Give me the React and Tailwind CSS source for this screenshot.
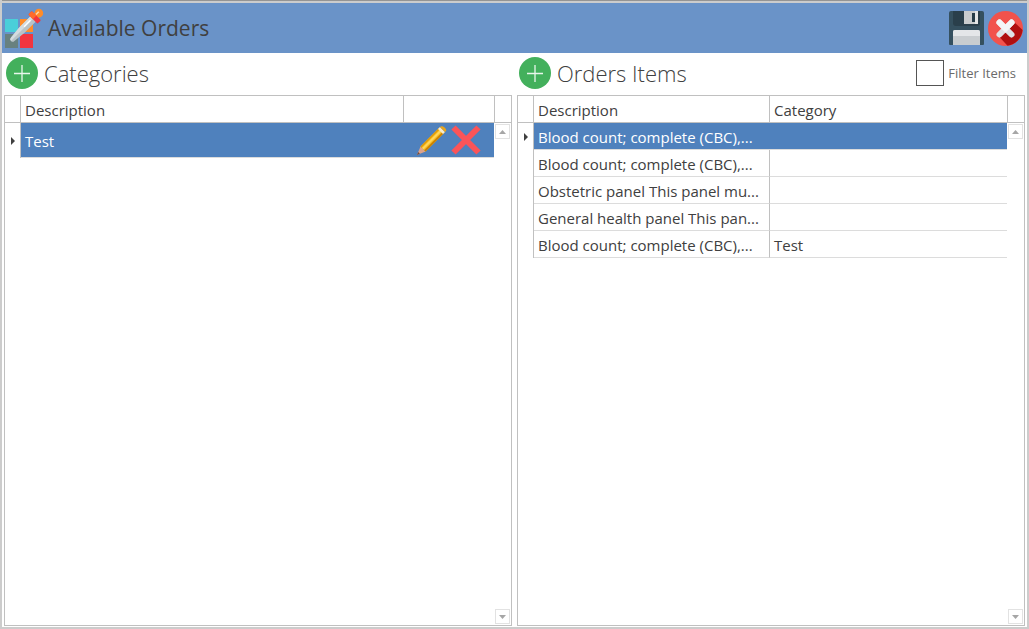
import React from "react";

function PaletteIcon() {
  return (
    <svg width="40" height="42" viewBox="0 0 40 42" aria-hidden="true">
      <rect x="1" y="12" width="13" height="13" fill="#4acfd9" />
      <rect x="16" y="12" width="13" height="13" fill="#ff8c29" />
      <rect x="1" y="27" width="13" height="14" fill="#68817f" />
      <rect x="16" y="27" width="13" height="14" fill="#f2353f" />
      <g transform="translate(8 33) rotate(45)">
        <path d="M-3.800-31h7.600v17L2.400-1a2.400 2.400 0 0 1-4.800 0l-1.400-13z" fill="#b9c3c7" />
        <path d="M-3.800-31H0V1.400A2.400 2.400 0 0 1-2.400-1l-1.400-13z" fill="#d5dcdf" />
        <path d="M-1.600-27h1.400v9h-1.400z" fill="#fff" />
        <circle cx="0" cy="-38" r="4.300" fill="#ff8c29" />
        <path d="M-3-37h6v5h-6z" fill="#ff8c29" />
        <rect x="-6.500" y="-34.500" width="13" height="5" rx="1" fill="#f2353f" />
        <path d="M-5.500-34.500H0v5h-5.500a1 1 0 0 1-1-1v-3a1 1 0 0 1 1-1z" fill="#ff6a2b" />
        <path d="M-1.800-35v-4h1.400v4z" fill="#ffd9b0" />
      </g>
    </svg>
  );
}

function SaveIcon() {
  return (
    <svg width="35" height="35" viewBox="0 0 35 35" aria-hidden="true">
      <path d="M2 0h31a2 2 0 0 1 2 2v31a1 1 0 0 1-1 1H1a1 1 0 0 1-1-1V2a2 2 0 0 1 2-2z" fill="#35505f" />
      <path d="M4 0h27v12a3 3 0 0 1-3 3H7a3 3 0 0 1-3-3z" fill="#2a3f4b" />
      <path d="M15 0h14v13H15z" fill="#c9ccce" />
      <path d="M26 0h3v13h-3z" fill="#e4e6e7" />
      <rect x="23" y="2" width="3" height="9" fill="#263c48" />
      <path d="M4 34V21a2 2 0 0 1 2-2h23a2 2 0 0 1 2 2v13z" fill="#c9cdd0" />
      <path d="M4 25v-4a2 2 0 0 1 2-2h23a2 2 0 0 1 2 2v4z" fill="#e4e6e8" />
    </svg>
  );
}

function CloseIcon() {
  return (
    <svg width="35" height="35" viewBox="0 0 35 35" aria-hidden="true">
      <circle cx="17.500" cy="17.500" r="17.500" fill="#f2524c" />
      <path d="M11 25.500l8.500 9.200A17.500 17.500 0 0 0 34.600 19L25 10z" fill="#b01010" />
      <path d="M11.500 11.500l12 12M23.500 11.500l-12 12" stroke="#dfe3e6" strokeWidth="6" strokeLinecap="round" />
      <path d="M11.500 11.500l6 6 6-6" stroke="#f4f5f6" strokeWidth="6" strokeLinecap="round" fill="none" />
    </svg>
  );
}

function AddIcon() {
  return (
    <svg width="32" height="32" viewBox="0 0 32 32" aria-hidden="true">
      <circle cx="16" cy="16" r="16" fill="#43b05c" />
      <path d="M16 8v17M8 16.500h16" stroke="#e8f6eb" strokeWidth="1.300" />
    </svg>
  );
}

function PencilIcon() {
  return (
    <svg width="30" height="30" viewBox="0 0 30 30" aria-hidden="true">
      <path d="M0 30l3.500-8.500 5 5z" fill="#dfa38a" />
      <path d="M0 30l1.200-2.900 1.700 1.700z" fill="#6d4a3f" />
      <path d="M3.500 21.500L22.500 2.500l5 5-19 19z" fill="#f5b81c" />
      <path d="M3.500 21.500L22.500 2.500l1 1-19 19z" fill="#e09a08" />
      <path d="M5 23L24 4l1.500 1.500-19 19z" fill="#ffd65a" />
      <path d="M7.300 25.300l19-19 1.200 1.200-19 19z" fill="#c97f00" />
      <path d="M21 4l2-2 5 5-2 2z" fill="#f4ead0" />
      <path d="M23 2c1.500-3 9 2.500 5 5z" fill="#e8a51c" />
    </svg>
  );
}

function DeleteIcon() {
  return (
    <svg width="30" height="30" viewBox="0 0 30 30" aria-hidden="true">
      <path d="M2.500 2.500l25 25M27.500 2.500l-25 25" stroke="#fb5458" strokeWidth="6" />
    </svg>
  );
}

function ScrollButton({ label, up }) {
  return (
    <button
      type="button"
      aria-label={label}
      className="flex size-[15px] items-center justify-center border border-[#e2e2e2] bg-white"
    >
      <svg width="7" height="4" viewBox="0 0 7 4" aria-hidden="true">
        <path d={up ? "M0 4L3.500 0 7 4z" : "M0 0h7L3.500 4z"} fill="#a6a6a6" />
      </svg>
    </button>
  );
}

function GridPanel({ label, children }) {
  return (
    <div className="flex flex-1 border border-[#c0c0c0]">
      <div className="min-w-0 flex-1" aria-label={label} role="group">
        {children}
      </div>
      <div className="flex w-[17px] flex-col">
        <div className="h-[27px] border-b border-l border-[#c0c0c0]" />
        <div className="flex flex-1 flex-col items-center justify-between py-px">
          <ScrollButton label={"Scroll " + label + " up"} up />
          <ScrollButton label={"Scroll " + label + " down"} />
        </div>
      </div>
    </div>
  );
}

function RowMarker({ active }) {
  return (
    <td className="border-r border-[#c0c0c0] p-0">
      {active && (
        <svg width="4" height="8" viewBox="0 0 4 8" className="ml-1.5" aria-label="Current row">
          <path d="M0 0l4 4-4 4z" fill="#404040" />
        </svg>
      )}
    </td>
  );
}

const headCell = "border-b border-r border-[#c0c0c0] px-1 pt-0.5 pb-0 text-left font-normal";

function SectionTitle({ children, addLabel }) {
  return (
    <div className="flex items-center gap-1.5">
      <button type="button" aria-label={addLabel}>
        <AddIcon />
      </button>
      <h2 className="text-[22px] font-light text-[#404040]">{children}</h2>
    </div>
  );
}

const orders = [
  { description: "Blood count; complete (CBC),...", category: "" },
  { description: "Blood count; complete (CBC),...", category: "" },
  { description: "Obstetric panel This panel mu...", category: "" },
  { description: "General health panel This pan...", category: "" },
  { description: "Blood count; complete (CBC),...", category: "Test" },
];

export default function App() {
  return (
    <div className="flex min-h-screen flex-col border-x-2 border-b-2 border-[#cccccc] bg-white font-['Open_Sans','Noto_Sans',sans-serif] text-[15px] leading-5 text-[#404040]">
      <div className="h-[3px] border-t border-[#949494] bg-[#cccccc]" />
      <header className="flex h-[50px] items-center justify-between bg-[#6a93c8] pr-1 pl-0.5">
        <div className="flex items-center gap-1">
          <PaletteIcon />
          <h1 className="text-[21px]">Available Orders</h1>
        </div>
        <div className="flex items-center gap-1">
          <button type="button" aria-label="Save">
            <SaveIcon />
          </button>
          <button type="button" aria-label="Close">
            <CloseIcon />
          </button>
        </div>
      </header>

      <main className="flex flex-1 gap-[5px] px-0.5 pb-px">
        <section className="flex min-w-0 flex-1 flex-col">
          <div className="flex h-[42px] items-center px-0.5 pb-0.5">
            <SectionTitle addLabel="Add category">Categories</SectionTitle>
          </div>
          <GridPanel label="categories">
            <table className="w-full table-fixed border-separate border-spacing-0">
              <colgroup>
                <col className="w-4" />
                <col />
                <col className="w-[90px]" />
              </colgroup>
              <thead>
                <tr className="h-[27px]">
                  <th className={headCell} />
                  <th className={headCell}>Description</th>
                  <th className="border-b border-[#c0c0c0]" />
                </tr>
              </thead>
              <tbody>
                <tr className="h-[35px]">
                  <RowMarker active />
                  <td className="border-b border-[#dcdcdc] bg-[#4f81bd] bg-clip-padding px-1 pt-0.5 pb-0 text-white">
                    Test
                  </td>
                  <td className="border-b border-[#dcdcdc] bg-[#4f81bd] bg-clip-padding p-0">
                    <div className="flex justify-end gap-1 pr-[13px]">
                      <button type="button" aria-label="Edit Test">
                        <PencilIcon />
                      </button>
                      <button type="button" aria-label="Delete Test">
                        <DeleteIcon />
                      </button>
                    </div>
                  </td>
                </tr>
              </tbody>
            </table>
          </GridPanel>
        </section>

        <section className="flex min-w-0 flex-1 flex-col">
          <div className="flex h-[42px] items-center justify-between pr-[9px] pb-0.5 pl-0.5">
            <SectionTitle addLabel="Add order item">Orders Items</SectionTitle>
            <label className="flex items-center gap-1 text-[13px] text-[#6a6a6a]">
              <input
                type="checkbox"
                className="h-[26px] w-7 appearance-none border border-[#555555] bg-white checked:bg-[#4f81bd]"
              />
              Filter Items
            </label>
          </div>
          <GridPanel label="order items">
            <table className="w-full table-fixed border-separate border-spacing-0">
              <colgroup>
                <col className="w-4" />
                <col className="w-[236px]" />
                <col />
              </colgroup>
              <thead>
                <tr className="h-[27px]">
                  <th className={headCell} />
                  <th className={headCell}>Description</th>
                  <th className="border-b border-[#c0c0c0] px-1 pt-0.5 pb-0 text-left font-normal">Category</th>
                </tr>
              </thead>
              <tbody>
                {orders.map((order, i) => (
                  <tr key={i} className={i === 0 ? "h-[27px] text-white" : "h-[27px]"}>
                    <RowMarker active={i === 0} />
                    <td
                      className={
                        i === 0
                          ? "truncate border-b border-[#dcdcdc] bg-[#4f81bd] bg-clip-padding px-1 pt-0.5 pb-0"
                          : "truncate border-r border-b border-r-[#c0c0c0] border-b-[#dcdcdc] px-1 pt-0.5 pb-0"
                      }
                    >
                      {order.description}
                    </td>
                    <td
                      className={
                        i === 0
                          ? "border-b border-[#dcdcdc] bg-[#4f81bd] bg-clip-padding px-1 pt-0.5 pb-0"
                          : "border-b border-[#dcdcdc] px-1 pt-0.5 pb-0"
                      }
                    >
                      {order.category}
                    </td>
                  </tr>
                ))}
              </tbody>
            </table>
          </GridPanel>
        </section>
      </main>
    </div>
  );
}
